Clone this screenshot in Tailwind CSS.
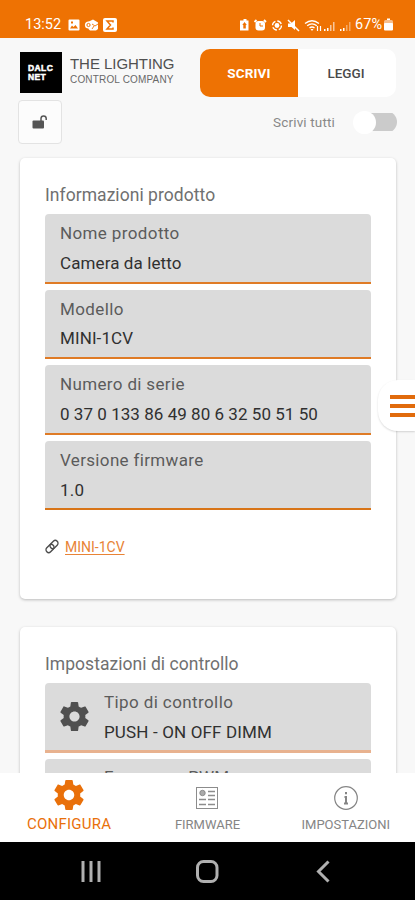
<!DOCTYPE html>
<html lang="it">
<head>
<meta charset="utf-8">
<title>Dalcnet</title>
<script src="https://cdn.jsdelivr.net/npm/@tailwindcss/browser@4"></script>
</head>
<body class="bg-[#f8f8f8]">
<svg class="hidden">
  <symbol id="gear" viewBox="2 2 20 20">
    <path fill="currentColor" d="M19.430 12.980c.04-.32.07-.64.07-.98s-.03-.66-.07-.98l2.110-1.650c.19-.15.24-.42.12-.64l-2-3.460c-.12-.22-.39-.3-.61-.22l-2.490 1c-.52-.4-1.080-.73-1.690-.98l-.38-2.650C14.460 2.180 14.250 2 14 2h-4c-.25 0-.46.18-.49.42l-.38 2.650c-.61.25-1.170.59-1.690.98l-2.490-1c-.23-.09-.49 0-.61.22l-2 3.460c-.13.22-.07.49.12.64l2.110 1.650c-.04.32-.07.65-.07.98s.03.66.07.98l-2.110 1.650c-.19.15-.24.42-.12.64l2 3.460c.12.22.39.3.61.22l2.490-1c.52.4 1.080.73 1.690.98l.38 2.650c.03.24.24.42.49.42h4c.25 0 .46-.18.49-.42l.38-2.650c.61-.25 1.170-.59 1.690-.98l2.490 1c.23.09.49 0 .61-.22l2-3.460c.12-.22.07-.49-.12-.64l-2.110-1.650zM12 15.500c-1.930 0-3.500-1.570-3.500-3.500s1.570-3.500 3.500-3.500 3.500 1.570 3.500 3.500-1.570 3.500-3.500 3.500z"/>
  </symbol>
</svg>
<div class="relative flex h-[900px] w-[415px] flex-col overflow-hidden bg-[#f8f8f8] font-['Roboto',sans-serif] text-[#707070]">

  <!-- Status bar -->
  <div class="flex h-[38px] shrink-0 items-end justify-between bg-[#ee7203] pr-[22px] pb-[5px] pl-[25px] text-white">
    <div class="flex items-center">
      <span class="w-[43px] text-[14.500px] leading-[17px]">13:52</span>
      <svg class="h-[12px] w-[12px]" viewBox="0 0 12 12"><path fill="white" fill-rule="evenodd" d="M1.500 .5h9a1 1 0 0 1 1 1v9a1 1 0 0 1-1 1h-9a1 1 0 0 1-1-1v-9a1 1 0 0 1 1-1zM2 9.500h8L7.500 6 5.500 8 4 6.500zM3 2.500v2h2v-2z"/></svg>
      <svg class="ml-[4px] h-[12px] w-[15px]" viewBox="0 0 15 12"><path fill="white" d="M4 3 9 .5l5 3V10l-2 1.500H6L4.500 10z"/><circle cx="4.500" cy="6" r="3.600" fill="white"/><circle cx="4.500" cy="6" r="1.600" fill="none" stroke="#ee7203"/><path d="M8 5l3 2 3-2M8 10l2-3" stroke="#ee7203" fill="none" stroke-width=".9"/></svg>
      <svg class="ml-[4px] h-[14px] w-[14px]" viewBox="0 0 14 14"><rect width="14" height="14" rx="2" fill="white"/><path d="M10 4.500V3H4l3.500 4L4 11h6V9.500" fill="none" stroke="#ee7203" stroke-width="1.500"/></svg>
    </div>
    <div class="flex items-center">
      <svg class="mr-[-2px] h-[14px] w-[117px]" viewBox="0 0 117 14">
        <path fill="white" fill-rule="evenodd" d="M3.500 1h3v1.500H8.500V12.500H0V2.500h3.500zM4.500 4 2.300 7h1v3.500h2.500V7h1z"/>
        <path d="M16.500 2l-2 2M24 2l2 2" stroke="white" stroke-width="1.800"/><rect x="15.500" y="3" width="9.500" height="9.500" rx="3" fill="white"/><path d="M20 5v3h3" stroke="#ee7203" fill="none"/>
        <circle cx="37" cy="7.500" r="4.500" fill="none" stroke="white" stroke-width="1.300" stroke-dasharray="5 2"/><circle cx="37" cy="7.500" r="2.400" fill="white"/>
        <path fill="white" d="M48 5.500h3L55 2v10L51.500 9H48z"/><path d="M48 2 59 13" stroke="white" stroke-width="1.500"/>
        <g fill="none" stroke="white" stroke-width="1.400"><path d="M65 5.500q7-5.500 14 0M67.200 7.800q4.800-3.800 9.600 0M69.500 10q2.500-2 5 0"/><path d="M77.500 8v5M80.500 8v5" stroke-width="1.200"/></g>
        <g fill="white"><path d="M70.500 11h3L72 13z"/><path d="M84 11h1.500v2H84zM87 10h1.500v3H87z"/><path fill-opacity=".6" d="M90 7h1.500v6H90zM93 4h1.500v9H93z"/><path d="M100 11h1.500v2H100zM103 10h1.500v3H103z"/><path fill-opacity=".4" d="M106 7h1.500v6H106zM109 4h1.500v9H109z"/></g>
      </svg>
      <span class="text-[14.500px] leading-[17px]">67%</span>
      <svg class="ml-[2px] h-[13px] w-[9px]" viewBox="0 0 9 13"><path fill="white" d="M3 .5h3V2H3zM1.500 5h6.500a1 1 0 0 1 1 1v5.500a1 1 0 0 1-1 1H1a1 1 0 0 1-1-1V6a1 1 0 0 1 1-1z"/><rect y="2" width="9" height="10" rx="1.500" fill="white" fill-opacity=".55"/></svg>
    </div>
  </div>

  <!-- Brand and mode selector -->
  <header class="flex shrink-0 items-start pt-[11px] pl-[20px]">
    <div class="mt-[3px] flex h-[41px] w-[42px] flex-col bg-black pt-[12px] pl-[8px] font-['Liberation_Sans',sans-serif] text-[8.500px] leading-[8.500px] font-bold text-white [-webkit-text-stroke:0.5px_white]">
      <span class="tracking-[0.400px]">DALC</span><span class="tracking-[0.300px]">NET</span>
    </div>
    <div class="ml-[8px] w-[130px] pt-[5px] font-['Liberation_Sans',sans-serif] whitespace-nowrap">
      <div class="text-[15px] leading-[19px] tracking-[-0.050px] text-[#505050]">THE LIGHTING</div>
      <div class="mt-[1px] text-[10px] leading-[12px] tracking-[0.170px] text-[#686868]">CONTROL COMPANY</div>
    </div>
    <div class="flex h-[48px] w-[196px] overflow-hidden rounded-[10px] bg-white text-[13.500px] font-bold">
      <div class="flex w-1/2 items-center justify-center bg-[#ee7203] text-white"><span class="tracking-[0.150px]">SCRIVI</span></div>
      <div class="flex w-1/2 items-center justify-center font-medium text-[#4a4a4a]"><span class="pr-[2px]">LEGGI</span></div>
    </div>
  </header>

  <!-- Lock and write-all switch -->
  <div class="mt-[3px] flex shrink-0 items-center justify-between pr-[18px] pl-[18px]">
    <div class="flex h-[44px] w-[44px] items-center justify-center rounded-[4px] border border-[#e3e3e3] bg-[#fcfcfc]">
      <svg class="h-[16px] w-[16px]" viewBox="0 0 16 16"><rect x=".5" y="6.500" width="11.500" height="8" rx="1" fill="#555"/><path d="M9 7V4.500a2.600 2.600 0 0 1 5.200 0V6" fill="none" stroke="#555" stroke-width="1.500"/></svg>
    </div>
    <div class="flex items-center">
      <span class="text-[13.500px] tracking-[0.150px] text-[#888]">Scrivi tutti</span>
      <div class="ml-[18px] flex h-[22px] w-[44px] items-center rounded-full bg-[linear-gradient(to_right,transparent_30%,#cbcbcb_30%)] bg-[length:100%_18px] bg-center bg-no-repeat">
        <div class="h-[23px] w-[23px] rounded-full bg-white"></div>
        <div class="h-[18px] flex-1"></div>
      </div>
    </div>
  </div>

  <!-- Product information -->
  <section class="mr-[19px] ml-[20px] mt-[14px] h-[441px] shrink-0 rounded-[5px] bg-white px-[25px] pt-[27px] shadow-[0_1px_3px_rgba(0,0,0,0.25)]">
    <h2 class="h-[29px] text-[17.500px] leading-[20px] tracking-[0.050px]">Informazioni prodotto</h2>
    <div class="flex flex-col gap-[6px] text-[17px] leading-[20px]">
      <div class="h-[69.600px] rounded-t-[4px] border-b-2 border-[#df7b26] bg-[#dbdbdb] pt-[9px] pl-[15px]">
        <div class="tracking-[0.380px] text-[#5b5b5b]">Nome prodotto</div>
        <div class="mt-[9.500px] tracking-[0.100px] text-[#303030]">Camera da letto</div>
      </div>
      <div class="h-[69.600px] rounded-t-[4px] border-b-2 border-[#df7b26] bg-[#dbdbdb] pt-[9px] pl-[15px]">
        <div class="tracking-[0.380px] text-[#5b5b5b]">Modello</div>
        <div class="mt-[9.500px] tracking-[0.100px] text-[#303030]">MINI-1CV</div>
      </div>
      <div class="h-[69.600px] rounded-t-[4px] border-b-2 border-[#df7b26] bg-[#dbdbdb] pt-[9px] pl-[15px]">
        <div class="tracking-[0.350px] text-[#5b5b5b]">Numero di serie</div>
        <div class="mt-[9.500px] tracking-[0.040px] text-[#303030]">0 37 0 133 86 49 80 6 32 50 51 50</div>
      </div>
      <div class="h-[69.600px] rounded-t-[4px] border-b-2 border-[#d87417] bg-[#dbdbdb] pt-[9.300px] pl-[15px]">
        <div class="tracking-[0.340px] text-[#5b5b5b]">Versione firmware</div>
        <div class="mt-[9.500px] tracking-[0.200px] text-[#303030]">1.0</div>
      </div>
    </div>
    <div class="mt-[27.600px] flex items-center gap-[6px]">
      <svg class="h-[15px] w-[14px]" viewBox="0 0 14 14" fill="none" stroke="#4c4c4c" stroke-width="1.400"><rect x="-4.500" y="-2.700" width="9" height="5.400" rx="2.700" transform="translate(9 5) rotate(-45)"/><rect x="-4.500" y="-2.700" width="9" height="5.400" rx="2.700" transform="translate(5 9) rotate(-45)"/></svg>
      <a class="text-[14px] leading-[18px] text-[#e88336] underline underline-offset-2">MINI-1CV</a>
    </div>
  </section>

  <!-- Control settings -->
  <section class="mr-[19px] ml-[20px] mt-[28px] h-[300px] shrink-0 rounded-[5px] bg-white px-[25px] pt-[27px] shadow-[0_1px_3px_rgba(0,0,0,0.25)]">
    <h2 class="h-[29px] text-[17.500px] leading-[20px] tracking-[0.040px]">Impostazioni di controllo</h2>
    <div class="flex flex-col gap-[5.500px] text-[17px] leading-[20px]">
      <div class="flex h-[70px] items-center rounded-t-[4px] border-b-[3px] border-[#e8b28f] bg-[#dbdbdb] pl-[15px]">
        <svg class="mr-[15px] h-[29px] w-[29px] text-[#505050]"><use href="#gear"/></svg>
        <div>
          <div class="tracking-[0.400px] text-[#5b5b5b]">Tipo di controllo</div>
          <div class="mt-[10px] tracking-[0.150px] text-[#303030]">PUSH - ON OFF DIMM</div>
        </div>
      </div>
      <div class="h-[70px] rounded-t-[4px] bg-[#dbdbdb] pt-[8px] pl-[59px]">
        <div class="tracking-[0.100px] text-[#5b5b5b]">Frequenza PWM</div>
      </div>
    </div>
  </section>

  <!-- Side menu handle -->
  <div class="absolute top-[380px] right-0 flex h-[51px] w-[37px] flex-col items-end justify-center gap-[5px] rounded-l-[20px] bg-white shadow-[0_1px_2px_rgba(0,0,0,0.15)]">
    <div class="h-[4px] w-[25px] bg-[#e16b0c]"></div>
    <div class="h-[4px] w-[25px] bg-[#e16b0c]"></div>
    <div class="h-[4px] w-[25px] bg-[#e16b0c]"></div>
  </div>

  <!-- Bottom navigation -->
  <div class="absolute inset-x-0 bottom-0">
    <nav class="grid h-[69px] grid-cols-3 bg-white text-center text-[13px] text-[#858585]">
      <div class="flex flex-col items-center pt-[7px] text-[#e9700a]">
        <svg class="h-[30px] w-[30px]"><use href="#gear"/></svg>
        <span class="mt-[5px] text-[15px] leading-[18px] tracking-[0.250px]">CONFIGURA</span>
      </div>
      <div class="flex flex-col items-center pt-[13px]">
        <svg class="h-[24px] w-[24px]" viewBox="0 0 24 24" fill="none" stroke="#8c8c8c"><rect x="1.500" y="1.500" width="21" height="21"/><circle cx="7.500" cy="7" r="2.700" fill="#aaa"/><path stroke-width="1.500" d="M13 5.500h7M13 9.500h7M4 13.500h7M13 13.500h7M4 18.500h7M13 18.500h7"/></svg>
        <span class="mt-[6px] leading-[18px]">FIRMWARE</span>
      </div>
      <div class="flex flex-col items-center pt-[13px]">
        <svg class="h-[24px] w-[24px]" viewBox="0 0 24 24" fill="none" stroke="#858585"><circle cx="12" cy="12" r="11.300" stroke-width="1.200"/><path stroke-width="2" d="M12 6v2.200M12 10v8M10.500 11h1.500M10 17.500h4"/></svg>
        <span class="mt-[6px] leading-[18px]">IMPOSTAZIONI</span>
      </div>
    </nav>
    <div class="relative h-[58px] bg-black">
      <svg class="h-[58px] w-[415px]" viewBox="0 0 415 58" fill="none" stroke="#b0b0b0"><path stroke-width="3" d="M83 19v21M91 19v21M99 19v21"/><rect x="197.500" y="19.500" width="19.500" height="20" rx="6" stroke-width="3"/><path stroke-width="3" d="M328.500 19.500 318.500 29.500l10 10"/></svg>
    </div>
  </div>
</div>
</body>
</html>
